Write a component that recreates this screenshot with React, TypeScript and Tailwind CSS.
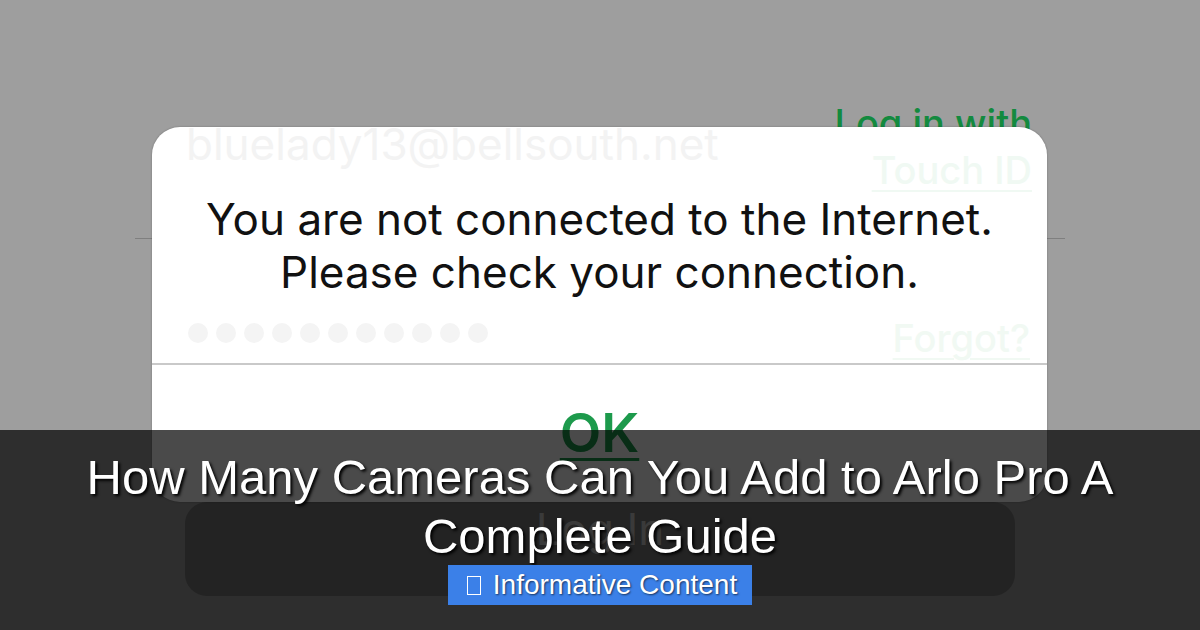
import React from "react";

const dots = Array.from({ length: 11 });

const App = () => {
  return (
    <div className="relative w-[1200px] h-[630px] overflow-hidden bg-[#9e9e9e] font-['Inter',sans-serif]">
      {/* login screen behind the alert; the faint bits show through the alert */}
      <div className="flex flex-col">
        <div className="flex flex-row justify-between items-start pt-[100px] pl-[186px] pr-[168px]">
          <div className="relative z-20 mt-[22px] text-[44px] leading-[44px] text-[#f3f3f3]">bluelady13@bellsouth.net</div>
          <div className="flex flex-col items-end text-[38px] leading-[47px] font-medium">
            <span className="text-[#138a3f] underline underline-offset-[6px] decoration-2">Log in with</span>
            <span className="relative z-20 text-[#f0f9f3] underline underline-offset-[6px] decoration-2">Touch ID</span>
          </div>
        </div>
        <div className="mt-[44px] mx-[135px] h-px bg-[#7f7f7f]"></div>
        <div className="flex flex-row justify-between items-start mt-[76px] pl-[188px] pr-[170px]">
          <div className="relative z-20 flex flex-row gap-[8px] mt-[8px]">
            {dots.map((_, i) => (
              <span key={i} className="block w-[20px] h-[20px] rounded-full bg-[#f4f4f4]"></span>
            ))}
          </div>
          <span className="relative z-20 text-[38px] leading-[46px] text-[#f1f9f3] font-medium underline underline-offset-[6px] decoration-2">Forgot?</span>
        </div>
        <div className="mt-[141px] mx-[185px] h-[94px] rounded-[22px] bg-[#787878] flex justify-center pt-[2px]">
          <span className="text-[44px] leading-[50px] text-[#c8c8c8]">Log In</span>
        </div>
      </div>

      {/* alert */}
      <div className="absolute z-10 left-[152px] top-[127px] w-[895px] h-[375px] rounded-[28px] bg-white shadow-[0_0_2px_rgba(0,0,0,0.3)] flex flex-col">
        <div className="pt-[66px] text-center text-[44px] leading-[53px] text-[#111]">
          <p>You are not connected to the Internet.</p>
          <p>Please check your connection.</p>
        </div>
        <div className="mt-[64px] h-[2px] bg-[#c9c9c9]"></div>
        <div className="pt-[41px] flex justify-center">
          <span className="text-[54px] leading-[54px] font-semibold text-[#1d9a4c] underline underline-offset-[6px] decoration-[3px]">OK</span>
        </div>
      </div>

      {/* caption */}
      <div className="absolute z-30 left-0 right-0 bottom-0 h-[200px] bg-[rgba(0,0,0,0.71)] flex flex-col items-center pt-[18px] font-['Liberation_Sans',Arial,sans-serif]">
        <h1 className="px-[40px] text-center text-[49px] leading-[59px] text-white [text-shadow:2px_2px_3px_#000]">
          How Many Cameras Can You Add to Arlo Pro A Complete Guide
        </h1>
        <div className="mt-[-1px] h-[40px] flex flex-row items-center bg-[#3b80e8] pl-[19px] pr-[15px] text-[28px] text-white [text-shadow:1px_1px_2px_rgba(0,0,0,0.6)]">
          <span className="inline-block w-[14px] h-[19px] border border-white mr-[12px]"></span>
          <span>Informative Content</span>
        </div>
      </div>
    </div>
  );
};

export default App;
